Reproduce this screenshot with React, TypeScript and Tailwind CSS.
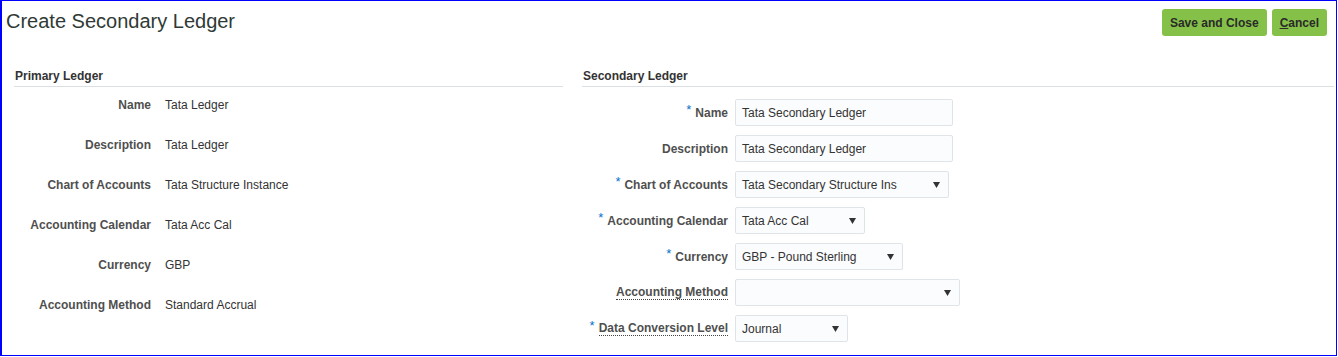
import React from "react";

type Row = { label: string; value: string };

const primaryRows: Row[] = [
  { label: "Name", value: "Tata Ledger" },
  { label: "Description", value: "Tata Ledger" },
  { label: "Chart of Accounts", value: "Tata Structure Instance" },
  { label: "Accounting Calendar", value: "Tata Acc Cal" },
  { label: "Currency", value: "GBP" },
  { label: "Accounting Method", value: "Standard Accrual" },
];

type Field = {
  label: string;
  value: string;
  width: string;
  required?: boolean;
  select?: boolean;
  dotted?: boolean;
};

const secondaryFields: Field[] = [
  { label: "Name", value: "Tata Secondary Ledger", width: "w-[218px]", required: true },
  { label: "Description", value: "Tata Secondary Ledger", width: "w-[218px]" },
  { label: "Chart of Accounts", value: "Tata Secondary Structure Ins", width: "w-[214px]", required: true, select: true },
  { label: "Accounting Calendar", value: "Tata Acc Cal", width: "w-[130px]", required: true, select: true },
  { label: "Currency", value: "GBP - Pound Sterling", width: "w-[168px]", required: true, select: true },
  { label: "Accounting Method", value: "", width: "w-[225px]", select: true, dotted: true },
  { label: "Data Conversion Level", value: "Journal", width: "w-[113px]", required: true, select: true, dotted: true },
];

function Arrow() {
  return (
    <svg width="7" height="6" viewBox="0 0 7 6" className="shrink-0">
      <polygon points="0,0 7,0 3.5,6" fill="#333" />
    </svg>
  );
}

function SectionHeader({ title }: { title: string }) {
  return (
    <div className="h-[21px] border-b border-[#d9dfe3] pt-[4px]">
      <span className="block pl-[1px] text-[12px] font-bold leading-[12px] text-[#333]">{title}</span>
    </div>
  );
}

export default function App() {
  return (
    <div className="h-[356px] w-[1337px] border border-l-2 border-[#0000ff] bg-white font-['Liberation_Sans',Arial,sans-serif]">
      <div className="flex items-start justify-between pl-[4px] pr-[9px] pt-[8px]">
        <h1 className="mt-[-1px] text-[20px] leading-[27px] text-[#2f3a36]">Create Secondary Ledger</h1>
        <div className="flex gap-[5px]">
          <button className="h-[27px] rounded-[3px] bg-[#85c148] px-[8px] text-[12px] font-bold text-[#2a2a2a]">
            Save and Close
          </button>
          <button className="h-[27px] rounded-[3px] bg-[#85c148] px-[8px] text-[12px] font-bold text-[#2a2a2a]">
            <span className="underline">C</span>ancel
          </button>
        </div>
      </div>

      <div className="ml-[12px] mt-[30px] flex gap-[19px]">
        <div className="w-[549px]">
          <SectionHeader title="Primary Ledger" />
          <div className="mt-[10px] flex flex-col gap-[24px]">
            {primaryRows.map((r) => (
              <div key={r.label} className="flex text-[12px] leading-[16px]">
                <div className="w-[137px] text-right font-bold text-[#4f4f4f]">{r.label}</div>
                <div className="ml-[14px] text-[#333]">{r.value}</div>
              </div>
            ))}
          </div>
        </div>

        <div className="w-[752px]">
          <SectionHeader title="Secondary Ledger" />
          <div className="mt-[12px] flex flex-col gap-[9px]">
            {secondaryFields.map((f) => (
              <div key={f.label} className="flex h-[27px] items-center text-[12px]">
                <div className="flex w-[146px] items-center justify-end font-bold text-[#4f4f4f]">
                  {f.required && (
                    <span className="relative top-[-3px] mr-[4px] text-[13px] font-normal leading-none text-[#0572ce]">*</span>
                  )}
                  <span
                    className={
                      f.dotted
                        ? "border-b border-dotted border-[#444] leading-[14px]"
                        : "leading-[16px]"
                    }
                  >
                    {f.label}
                  </span>
                </div>
                <div
                  className={`ml-[7px] flex h-[27px] items-center justify-between rounded-[2px] border border-[#dfe4e8] bg-[#fbfcfd] pl-[6px] pr-[8px] text-[#333] ${f.width}`}
                >
                  <span className="leading-[16px]">{f.value}</span>
                  {f.select && <Arrow />}
                </div>
              </div>
            ))}
          </div>
        </div>
      </div>
    </div>
  );
}
